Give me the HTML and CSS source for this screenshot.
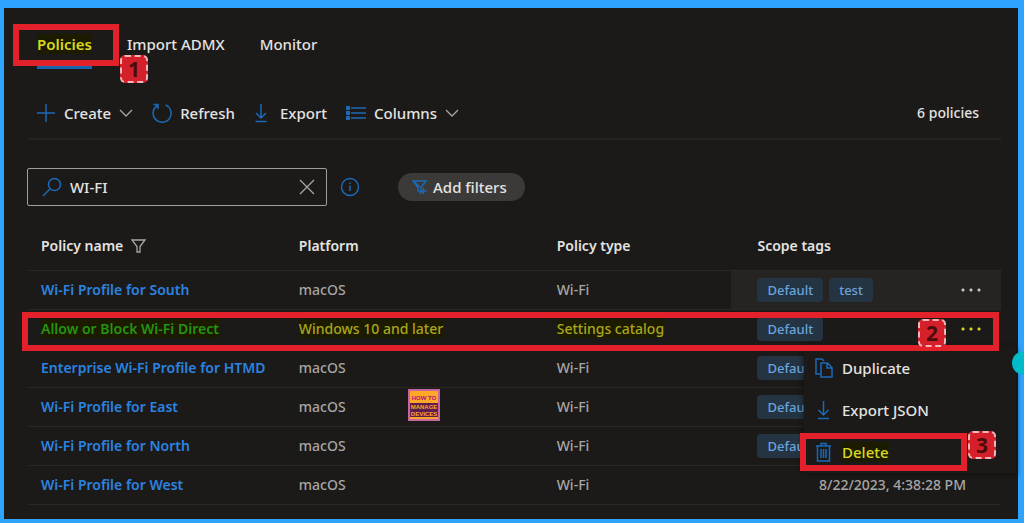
FILE: index.html
```
<!DOCTYPE html>
<html lang="en">
<head>
    <meta charset="utf-8">
    <meta name="viewport" content="width=device-width, initial-scale=1.0">
    <title>Policies</title>
    <link rel="stylesheet" href="styles.css">
</head>
<body>
    <main class="panel">
        <nav class="tabs">
            <a href="#policies" class="tab active"><span class="mark">Policies</span><span class="outline outline-tab"></span><span class="step step-1">1</span></a>
            <a href="#import" class="tab">Import ADMX</a>
            <a href="#monitor" class="tab">Monitor</a>
        </nav>

        <div class="toolbar">
            <button type="button" class="cmd">
                <svg class="icon" width="20" height="20" viewBox="0 0 20 20"><path d="M10 1v18M1 10h18"/></svg>
                Create
                <svg class="chevron" width="14" height="8" viewBox="0 0 14 8"><path d="M1 1l6 6 6-6"/></svg>
            </button>
            <button type="button" class="cmd">
                <svg class="icon" width="20" height="20" viewBox="0 0 20 20"><path d="M13.500 1.900A9 9 0 1 1 5.500 2.500M1.500 1.500h4.500v4.500"/></svg>
                Refresh
            </button>
            <button type="button" class="cmd cmd-export">
                <svg class="icon" width="14" height="20" viewBox="0 0 14 20"><path d="M7 1v14M2 10l5 5 5-5M1.500 18.500h11"/></svg>
                Export
            </button>
            <button type="button" class="cmd">
                <svg class="icon" width="20" height="14" viewBox="0 0 20 14"><path d="M5 2h15M5 7h15M5 12h15"/><path class="dots" d="M0 2h4M0 7h4M0 12h4"/></svg>
                Columns
                <svg class="chevron" width="14" height="8" viewBox="0 0 14 8"><path d="M1 1l6 6 6-6"/></svg>
            </button>
            <span class="count">6 policies</span>
        </div>

        <div class="filters">
            <div class="search">
                <svg class="icon" width="20" height="20" viewBox="0 0 20 20"><circle cx="12.500" cy="7.500" r="6"/><path d="M8.200 11.800L1 19"/></svg>
                <input type="text" value="WI-FI" aria-label="Search policies">
                <button type="button" class="clear" aria-label="Clear">
                    <svg width="16" height="16" viewBox="0 0 16 16"><path d="M1 1l14 14M15 1L1 15"/></svg>
                </button>
            </div>
            <button type="button" class="info" aria-label="Info">
                <svg class="icon" width="20" height="20" viewBox="0 0 20 20"><circle cx="10" cy="10" r="8.500"/><path d="M10 8.500v5.500M10 5.500v1.500"/></svg>
            </button>
            <button type="button" class="add-filters">
                <svg class="icon" width="16" height="16" viewBox="0 0 16 16"><path d="M1 2h13L9 8.500V14l-3-2.500v-3zM1 2l7 6M11.500 9v6M8.500 12h6"/></svg>
                Add filters
            </button>
        </div>

        <table class="policies">
            <colgroup>
                <col class="col-name">
                <col class="col-platform">
                <col class="col-type">
                <col class="col-scope">
                <col class="col-more">
            </colgroup>
            <thead>
                <tr>
                    <th>Policy name <svg class="funnel" width="16" height="14" viewBox="0 0 16 14"><path d="M1 1h13L9 7.500V13H6V7.500z"/></svg></th>
                    <th>Platform</th>
                    <th>Policy type</th>
                    <th class="scope">Scope tags</th>
                    <th></th>
                </tr>
            </thead>
            <tbody>
                <tr>
                    <td><a href="#south">Wi-Fi Profile for South</a></td>
                    <td>macOS</td>
                    <td>Wi-Fi</td>
                    <td class="scope hover"><span class="tag">Default</span><span class="tag">test</span></td>
                    <td class="hover"><button type="button" class="more" aria-label="More"></button></td>
                </tr>
                <tr class="selected">
                    <td><a href="#direct"><span class="mark">Allow or Block Wi-Fi Direct</span></a><span class="outline outline-row"></span></td>
                    <td><span class="mark">Windows 10 and later</span></td>
                    <td><span class="mark">Settings catalog</span></td>
                    <td class="scope"><span class="tag">Default</span></td>
                    <td>
                        <button type="button" class="more" aria-label="More"></button>
                        <span class="step step-2">2</span>
                        <div class="menu">
                            <button type="button" class="menu-item">
                                <svg class="icon" width="18" height="20" viewBox="0 0 18 20"><path d="M5.500 16H1V1h6l2 2M6 5h6.500l4.500 4.500V19H6zM12 5v5h5"/></svg>
                                Duplicate
                            </button>
                            <button type="button" class="menu-item">
                                <svg class="icon" width="18" height="20" viewBox="0 0 18 20"><path d="M8.500 1v14M3.500 10l5 5 5-5M3 18.500h11"/></svg>
                                Export JSON
                            </button>
                            <button type="button" class="menu-item">
                                <svg class="icon" width="18" height="20" viewBox="0 0 18 20"><path d="M1 4h15M6 4V1.500h5V4M2.500 4v15h12V4M6 7v9M8.500 7v9M11 7v9"/></svg>
                                <span class="mark">Delete</span>
                                <span class="outline outline-delete"></span>
                                <span class="step step-3">3</span>
                            </button>
                        </div>
                    </td>
                </tr>
                <tr>
                    <td><a href="#htmd">Enterprise Wi-Fi Profile for HTMD</a></td>
                    <td>macOS</td>
                    <td>Wi-Fi</td>
                    <td class="scope"><span class="tag">Default</span></td>
                    <td></td>
                </tr>
                <tr>
                    <td><a href="#east">Wi-Fi Profile for East</a></td>
                    <td class="branded">macOS
                        <svg class="logo" width="32" height="32" viewBox="0 0 32 32">
                            <rect class="logo-edge" width="32" height="32"/>
                            <rect class="logo-fill" x="2" y="2" width="28" height="28"/>
                            <rect class="logo-band" x="2" y="14" width="28" height="14"/>
                            <text class="logo-top" x="16" y="11">HOW TO</text>
                            <text class="logo-name" x="16" y="20">MANAGE</text>
                            <text class="logo-name" x="16" y="27">DEVICES</text>
                        </svg>
                    </td>
                    <td>Wi-Fi</td>
                    <td class="scope"><span class="tag">Default</span></td>
                    <td></td>
                </tr>
                <tr>
                    <td><a href="#north">Wi-Fi Profile for North</a></td>
                    <td>macOS</td>
                    <td>Wi-Fi</td>
                    <td class="scope"><span class="tag">Default</span></td>
                    <td></td>
                </tr>
                <tr>
                    <td><a href="#west">Wi-Fi Profile for West</a></td>
                    <td>macOS</td>
                    <td>Wi-Fi</td>
                    <td class="date" colspan="2">8/22/2023, 4:38:28 PM</td>
                </tr>
            </tbody>
        </table>
    </main>
    <span class="bubble"></span>
</body>
</html>
```
FILE: styles.css
```
* {
    box-sizing: border-box;
}
body {
    margin: 0;
    padding: 8px 6px 4px 4px;
    min-height: 100vh;
    display: flex;
    position: relative;
    overflow: hidden;
    background-color: #2ea3ff;
    color: #e4e3e1;
    font-family: "Noto Sans", "Open Sans", sans-serif;
    font-size: 15px;
    line-height: 20px;
}
button {
    padding: 0;
    border: none;
    background: none;
    color: inherit;
    font: inherit;
    cursor: pointer;
}
a {
    text-decoration: none;
}
svg {
    display: block;
    flex: none;
    fill: none;
    stroke: #a8a6a4;
    stroke-width: 1.3;
}
.icon {
    stroke: #1b6ab8;
    stroke-width: 1.5;
}
.panel {
    flex: 1;
    padding: 18px 17px 0 24px;
    background-color: #1b1a19;
}

/* tabs */
.tabs {
    display: flex;
    gap: 35px;
    padding-left: 9px;
    font-weight: 500;
}
.tab {
    position: relative;
    padding: 8px 0 12px;
    border-bottom: 3px solid transparent;
    color: #e4e3e1;
}
.tab.active {
    border-bottom-color: #1765ad;
    font-weight: 600;
}
.mark {
    background-color: #1c1b00;
    color: #d8d823;
}

/* toolbar */
.toolbar {
    display: flex;
    align-items: center;
    height: 53px;
    margin-top: 18px;
    padding: 0 22px 0 8px;
    border-bottom: 2px solid #252423;
    font-weight: 500;
}
.cmd {
    display: flex;
    align-items: center;
    gap: 8px;
    margin-right: 19px;
}
.cmd-export {
    gap: 12px;
}
.dots {
    stroke-width: 4;
}
.count {
    margin-left: auto;
    font-size: 14px;
}

/* search and filters */
.filters {
    display: flex;
    align-items: center;
    margin-top: 28px;
    font-weight: 500;
}
.search {
    display: flex;
    align-items: center;
    gap: 8px;
    width: 300px;
    height: 38px;
    margin-left: -1px;
    padding: 0 11px 0 14px;
    border: 1px solid #a19f9d;
    border-radius: 2px;
}
.search input {
    flex: 1;
    min-width: 0;
    padding: 0;
    border: none;
    outline: none;
    background: none;
    color: #e4e3e1;
    font: inherit;
}
.info {
    margin: 0 38px 0 13px;
}
.add-filters {
    display: flex;
    align-items: center;
    gap: 5px;
    height: 28px;
    padding: 0 18px 0 14px;
    border-radius: 14px;
    background-color: #3b3a39;
}

/* table */
.policies {
    width: 100%;
    margin-top: 15px;
    table-layout: fixed;
    border-collapse: separate;
    border-spacing: 0;
    font-size: 14px;
    text-align: left;
}
.col-name,
.col-platform {
    width: 26.5%;
}
.col-type {
    width: 19.3%;
}
.col-more {
    width: 62px;
}
th,
td {
    height: 39px;
    padding: 0 0 0 13px;
    border-bottom: 1px solid #292827;
    white-space: nowrap;
}
th {
    height: 50px;
    font-weight: 600;
}
td {
    color: #a8a6a4;
    font-weight: 500;
}
td a {
    color: #2b83e0;
    font-weight: 600;
}
.funnel {
    display: inline-block;
    margin-left: 4px;
    vertical-align: -2px;
}
.scope {
    padding-left: 26px;
}
.hover {
    background-color: #252423;
}
.tag {
    display: inline-block;
    height: 24px;
    margin-right: 6px;
    padding: 0 10px;
    border-radius: 4px;
    background-color: #243442;
    color: #6ba3dc;
    font-size: 13px;
    line-height: 24px;
}
.date {
    padding-right: 35px;
    text-align: right;
}
.more {
    display: block;
    width: 24px;
    height: 24px;
    margin-left: 7px;
    background: radial-gradient(circle, #c8c6c4 1px, transparent 2px) center / 8px 8px repeat-x;
}
.selected {
    position: relative;
}
.selected td > .mark {
    color: #aaa51d;
}
.selected a .mark {
    color: #249413;
}
.selected .more {
    background-image: radial-gradient(circle, #d8d823 1px, transparent 2px);
}

/* row menu */
.menu {
    position: absolute;
    z-index: 1;
    top: 37px;
    right: -15px;
    width: 212px;
    background-color: #1b1a19;
    box-shadow: 0 1px 5px #111010;
    color: #e4e3e1;
    font-size: 15px;
}
.menu-item {
    position: relative;
    display: flex;
    align-items: center;
    gap: 9px;
    width: 100%;
    height: 42px;
    padding-left: 11px;
}

/* callouts */
.outline {
    position: absolute;
    z-index: 2;
    border: 6px solid #e3212b;
    pointer-events: none;
}
.outline-tab {
    top: -2px;
    left: -24px;
    right: -27px;
    bottom: 0;
}
.outline-row {
    top: 2px;
    left: -6px;
    right: 2px;
    bottom: -2px;
}
.outline-delete {
    top: 2px;
    left: -4px;
    right: 49px;
    bottom: 2px;
}
.step {
    position: absolute;
    z-index: 3;
    width: 28px;
    height: 28px;
    border: 2px dashed #f3b7b9;
    border-radius: 5px;
    background-color: #d4202a;
    color: #4a0d0a;
    font-size: 21px;
    font-weight: 700;
    line-height: 24px;
    text-align: center;
}
.step-1 {
    top: 29px;
    left: 83px;
}
.step-2 {
    top: 9px;
    right: 55px;
}
.step-3 {
    top: 0;
    right: 20px;
}

/* brand mark */
.branded {
    position: relative;
}
.logo {
    position: absolute;
    top: 1px;
    left: 122px;
    stroke: none;
    font-family: "Liberation Sans", sans-serif;
    font-weight: 700;
    text-anchor: middle;
}
.logo-edge {
    fill: #c765a0;
}
.logo-fill {
    fill: #ffa726;
}
.logo-band {
    fill: #5c1c4e;
}
.logo-top {
    fill: #b0127f;
    font-size: 6px;
}
.logo-name {
    fill: #ffa726;
    font-size: 6px;
}
.bubble {
    position: absolute;
    z-index: 4;
    top: 351px;
    right: -12px;
    width: 24px;
    height: 24px;
    border-radius: 50%;
    background-color: #00bccb;
}
```
